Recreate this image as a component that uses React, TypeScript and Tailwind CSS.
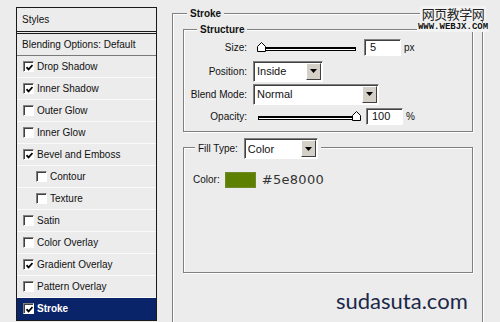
import React from 'react';

const etched = 'border border-[#808080] shadow-[inset_1px_1px_0_#fff,1px_1px_0_#fff]';

const Check: React.FC<{ on?: boolean }> = ({ on }) => (
  <span className="w-[11px] h-[11px] shrink-0 bg-white border-t border-l border-[#808080] border-r border-b border-r-white border-b-white shadow-[inset_1px_1px_0_#404040] flex items-center justify-center">
    {on && (
      <svg width="7" height="7" viewBox="0 0 7 7" className="ml-[1px] mt-[1px]">
        <path d="M0.5 3.2 L2.6 5.4 L6.5 1" stroke="#000" strokeWidth="1.7" fill="none" />
      </svg>
    )}
  </span>
);

const Select: React.FC<{ value: string; w: string }> = ({ value, w }) => (
  <div className={`${w} h-[21px] bg-white border-t border-l border-[#808080] border-r border-b border-r-white border-b-white shadow-[inset_1px_1px_0_#404040] flex items-center`}>
    <span className="flex-1 pl-[3px] pt-[1px] text-[11px]">{value}</span>
    <span className="w-[15px] h-[17px] mr-[1px] bg-[#d4d0c8] border-t border-l border-white border-r border-b border-r-[#404040] border-b-[#404040] flex items-center justify-center">
      <svg width="7" height="4" viewBox="0 0 7 4">
        <path d="M0 0 H7 L3.5 4 Z" fill="#000" />
      </svg>
    </span>
  </div>
);

const Slider: React.FC<{ end?: boolean }> = ({ end }) => (
  <div className="relative w-[100px] h-[12px] flex items-center">
    <div className="w-[98px] ml-[1px] h-[4px] mt-[3px] bg-white border-t-2 border-x border-b border-black" />
    <svg
      width="9"
      height="10"
      viewBox="0 0 9 10"
      className={`absolute top-[1px] ${end ? 'right-[-4px]' : 'left-0'}`}
    >
      <path d="M0.5 4.5 L4.5 0.5 L8.5 4.5 V9.5 H0.5 Z" fill="#fff" stroke="#000" strokeWidth="1" />
    </svg>
  </div>
);

const Field: React.FC<{ value: string }> = ({ value }) => (
  <div className="w-[37px] h-[17px] bg-white border-t border-l border-[#808080] border-r border-b border-r-white border-b-white shadow-[inset_1px_1px_0_#404040] flex items-center pl-[5px] text-[11px]">
    {value}
  </div>
);

const styles = [
  { label: 'Drop Shadow', on: true },
  { label: 'Inner Shadow', on: true },
  { label: 'Outer Glow' },
  { label: 'Inner Glow' },
  { label: 'Bevel and Emboss', on: true },
  { label: 'Contour', sub: true },
  { label: 'Texture', sub: true },
  { label: 'Satin' },
  { label: 'Color Overlay' },
  { label: 'Gradient Overlay', on: true },
  { label: 'Pattern Overlay' },
  { label: 'Stroke', on: true, active: true },
];

export default function App() {
  return (
    <div className="relative w-[500px] h-[322px] overflow-hidden bg-[#ececec] flex items-start font-['Liberation_Sans',Arial,sans-serif] text-[10px] text-[#111]">
      {/* styles list */}
      <div className="ml-[16px] mt-[7px] w-[141px] border border-[#1a1a1a] bg-[#ececec]">
        <div className="h-[24px] border-b border-[#1a1a1a] flex items-center pl-[5px]">Styles</div>
        <div className="mt-[1px] h-[23px] border-t border-[#1a1a1a] border-b border-b-[#7a7a7a] flex items-center pl-[5px]">
          Blending Options: Default
        </div>
        {styles.map(s => (
          <div
            key={s.label}
            className={`h-[22px] flex items-center gap-[3px] border-b ${
              s.active ? 'bg-[#0a246a] text-white font-bold border-[#0a246a]' : 'border-[#fafafa]'
            } ${s.sub ? 'pl-[19px]' : 'pl-[6px]'}`}
          >
            <Check on={s.on} />
            <span>{s.label}</span>
          </div>
        ))}
      </div>

      {/* stroke group */}
      <div className={`relative ml-[15px] mt-[13px] w-[311px] h-[330px] ${etched}`}>
        <span className="absolute left-[14px] top-[-8px] px-[3px] bg-[#ececec] font-bold">Stroke</span>

        <div className={`relative ml-[10px] mt-[15px] w-[290px] h-[103px] ${etched}`}>
          <span className="absolute left-[13px] top-[-8px] px-[3px] bg-[#ececec] font-bold">Structure</span>
          <div className="flex flex-col">
            <div className="mt-[7px] h-[20px] flex items-center">
              <span className="w-[63px] text-right">Size:</span>
              <div className="ml-[10px]"><Slider /></div>
              <div className="ml-[7px]"><Field value="5" /></div>
              <span className="ml-[3px]">px</span>
            </div>
            <div className="mt-[4px] h-[20px] flex items-center">
              <span className="w-[63px] text-right">Position:</span>
              <div className="ml-[6px]"><Select value="Inside" w="w-[70px]" /></div>
            </div>
            <div className="mt-[3px] h-[20px] flex items-center">
              <span className="w-[63px] text-right">Blend Mode:</span>
              <div className="ml-[6px]"><Select value="Normal" w="w-[126px]" /></div>
            </div>
            <div className="mt-[2px] h-[20px] flex items-center">
              <span className="w-[63px] text-right">Opacity:</span>
              <div className="ml-[10px]"><Slider end /></div>
              <div className="ml-[9px]"><Field value="100" /></div>
              <span className="ml-[3px]">%</span>
            </div>
          </div>
        </div>

        <div className={`relative ml-[10px] mt-[15px] w-[290px] h-[126px] ${etched}`}>
          <div className="absolute left-[11px] top-[-10px] px-[3px] bg-[#ececec] flex items-center gap-[6px]">
            <span>Fill Type:</span>
            <Select value="Color" w="w-[74px]" />
          </div>
          <div className="mt-[22px] pl-[9px] flex items-center">
            <span>Color:</span>
            <span className="ml-[5px] w-[31px] h-[16px] bg-[#5e8000] border border-[#6f8a2a]" />
            <span className="ml-[6px] text-[#333] font-['DejaVu_Sans',sans-serif] text-[13px] tracking-[0.3px]">#5e8000</span>
          </div>
        </div>
      </div>

      {/* watermarks */}
      <div className="absolute left-[416px] top-[6px] w-[74px] flex flex-col items-center gap-[2px]">
        <span className="px-[2px] bg-[#f3f3f3] text-[13px] leading-[15px] tracking-[-0.5px] text-[#222] font-['Noto_Sans_CJK_SC',sans-serif]">
          网页教学网
        </span>
        <span className="px-[1px] bg-[#f3f3f3] text-[9px] leading-[9px] font-bold text-[#111] font-['Liberation_Mono',monospace]">
          WWW.WEBJX.COM
        </span>
      </div>
      <span className="absolute left-[336px] top-[288px] text-[22px] leading-[26px] text-[#1b2848] font-['Lato',sans-serif]">
        sudasuta.com
      </span>
    </div>
  );
}
